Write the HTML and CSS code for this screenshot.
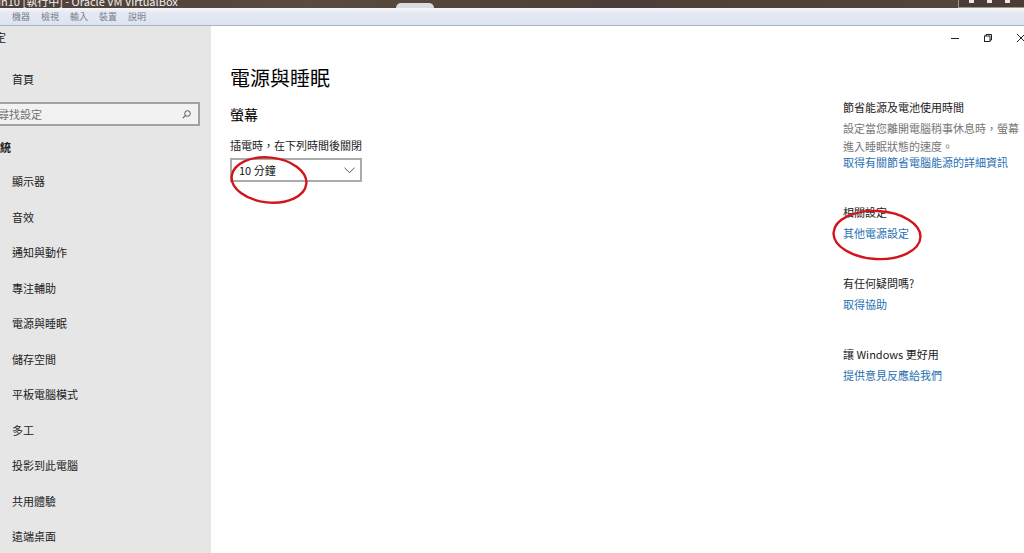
FILE: index.html
```html
<!DOCTYPE html>
<html lang="zh-Hant">
<head>
<meta charset="utf-8">
<title>電源與睡眠</title>
<link rel="stylesheet" href="styles.css">
</head>
<body>
<div class="vb-title">
  <span class="vb-title-text">in10 [執行中] - Oracle VM VirtualBox</span>
  <span class="vb-blob"></span>
  <span class="vb-btns"><i></i><i></i><i></i></span>
</div>
<div class="vb-menu">
  <span>機器</span><span>檢視</span><span>輸入</span><span>裝置</span><span>說明</span>
</div>
<div class="window">
  <aside class="sidebar">
    <div class="app-name">設定</div>
    <div class="home">首頁</div>
    <div class="search">
      <span class="search-ph">尋找設定</span>
      <svg class="search-ic" width="9" height="9" viewBox="0 0 9 9"><circle cx="5.5" cy="3.5" r="2.8" fill="none" stroke="#555" stroke-width="1"/><line x1="3.4" y1="5.6" x2="0.8" y2="8.2" stroke="#555" stroke-width="1.1"/></svg>
    </div>
    <div class="group">系統</div>
    <nav class="nav">
      <div class="nav-item">顯示器</div>
      <div class="nav-item">音效</div>
      <div class="nav-item">通知與動作</div>
      <div class="nav-item">專注輔助</div>
      <div class="nav-item">電源與睡眠</div>
      <div class="nav-item">儲存空間</div>
      <div class="nav-item">平板電腦模式</div>
      <div class="nav-item">多工</div>
      <div class="nav-item">投影到此電腦</div>
      <div class="nav-item">共用體驗</div>
      <div class="nav-item">遠端桌面</div>
    </nav>
  </aside>
  <main class="main">
    <div class="controls">
      <span class="ctl"><svg width="10" height="10" viewBox="0 0 10 10"><line x1="1" y1="5.5" x2="9" y2="5.5" stroke="#222" stroke-width="1"/></svg></span>
      <span class="ctl"><svg width="10" height="10" viewBox="0 0 10 10"><rect x="1.5" y="3" width="5.5" height="5.5" fill="none" stroke="#222" stroke-width="1"/><polyline points="3,3 3,1.5 8.5,1.5 8.5,7 7,7" fill="none" stroke="#222" stroke-width="1"/></svg></span>
      <span class="ctl ctl-close"><svg width="10" height="10" viewBox="0 0 10 10"><line x1="1" y1="1" x2="9" y2="9" stroke="#222" stroke-width="1"/><line x1="9" y1="1" x2="1" y2="9" stroke="#222" stroke-width="1"/></svg></span>
    </div>
    <div class="content">
      <section class="left">
        <h1 class="page-title">電源與睡眠</h1>
        <h2 class="sub">螢幕</h2>
        <div class="label">插電時，在下列時間後關閉</div>
        <div class="select">
          <span>10 分鐘</span>
          <svg width="11" height="7" viewBox="0 0 11 7"><polyline points="0.5,0.8 5.5,5.6 10.5,0.8" fill="none" stroke="#555" stroke-width="1"/></svg>
        </div>
      </section>
      <section class="right">
        <div class="r-head">節省能源及電池使用時間</div>
        <div class="r-desc">設定當您離開電腦稍事休息時，螢幕<br>進入睡眠狀態的速度。</div>
        <a class="r-link r-link-tight">取得有關節省電腦能源的詳細資訊</a>
        <div class="r-head r-gap">相關設定</div>
        <a class="r-link">其他電源設定</a>
        <div class="r-head r-gap">有任何疑問嗎?</div>
        <a class="r-link">取得協助</a>
        <div class="r-head r-gap">讓 Windows 更好用</div>
        <a class="r-link">提供意見反應給我們</a>
      </section>
    </div>
  </main>
</div>
<svg class="marks" width="1024" height="553" viewBox="0 0 1024 553">
  <ellipse cx="269" cy="180" rx="37.5" ry="22.5" transform="rotate(6 269 180)" fill="none" stroke="#d3141b" stroke-width="2.4"/>
  <ellipse cx="877" cy="235" rx="43.5" ry="24" transform="rotate(3 877 235)" fill="none" stroke="#d3141b" stroke-width="2.4"/>
</svg>
</body>
</html>
```
FILE: styles.css
```css
* { box-sizing: border-box; }
html, body { margin: 0; padding: 0; }
body {
  width: 1024px;
  height: 553px;
  overflow: hidden;
  position: relative;
  background: #fff;
  font-family: "Noto Sans CJK TC", "Noto Sans", "Liberation Sans", sans-serif;
  color: #1a1a1a;
}

.vb-title {
  height: 8px;
  overflow: hidden;
  display: flex;
  align-items: flex-end;
  background: linear-gradient(90deg, #4e4038 0%, #5a4a40 30%, #4d3f37 60%, #55463c 100%);
}
.vb-title-text {
  display: block;
  color: #f0f0f0;
  font-size: 11px;
  line-height: 11px;
  height: 11px;
  margin-bottom: 1px;
  margin-left: -2px;
  white-space: nowrap;
  width: 400px;
  flex: none;
}
.vb-blob {
  width: 38px;
  height: 5px;
  margin-left: -2px;
  border-radius: 5px 5px 0 0;
  background: #d9dde2;
  flex: none;
}
.vb-btns {
  margin-left: auto;
  width: 66px;
  height: 8px;
  border-left: 1px solid #a39686;
  border-bottom: 1px solid #a39686;
  background: #4a3d35;
  display: flex;
  gap: 13px;
  padding-left: 10px;
  flex: none;
}
.vb-btns i {
  display: block;
  width: 5px;
  height: 3px;
  background: #e8e8e8;
}

.vb-menu {
  height: 18px;
  display: flex;
  align-items: center;
  gap: 11px;
  padding-left: 12px;
  padding-top: 1px;
  background: linear-gradient(#f7f7fb 0%, #e6eaf4 25%, #dce3f0 100%);
  border-bottom: 1px solid #aab4c6;
  font-size: 9px;
  line-height: 12px;
  color: #7a7f8a;
}
.vb-menu span { white-space: nowrap; }

.window {
  display: flex;
  height: 527px;
}

.sidebar {
  width: 211px;
  flex: none;
  background: #e6e6e6;
  padding-top: 3px;
  font-size: 11px;
  line-height: 16px;
  overflow: hidden;
  color: #222;
}
.app-name { margin-left: -16px; white-space: nowrap; }
.home { margin-top: 26px; padding-left: 12px; }
.search {
  margin-top: 15px;
  margin-left: -20px;
  width: 220px;
  height: 24px;
  border: 2px solid #a2a2a2;
  background: #f2f2f2;
  display: flex;
  align-items: center;
  padding-left: 16px;
  padding-right: 7px;
  color: #707070;
}
.search-ph { flex: 1; }
.search-ic { display: block; }
.group { margin-top: 13px; margin-left: -11px; font-weight: 700; }
.nav { margin-top: 8.25px; }
.nav-item {
  height: 35.5px;
  display: flex;
  align-items: center;
  padding-left: 12px;
}

.main {
  flex: 1;
  overflow: hidden;
  display: flex;
  flex-direction: column;
}
.controls {
  height: 24px;
  display: flex;
  justify-content: flex-end;
  margin-right: -13px;
}
.ctl {
  width: 33px;
  display: flex;
  align-items: center;
  justify-content: center;
}
.content {
  display: flex;
  padding-top: 14px;
}
.left {
  padding-left: 19px;
  width: 632px;
}
.page-title {
  margin: 0;
  font-size: 20px;
  line-height: 28px;
  font-weight: 400;
  color: #000;
}
.sub {
  margin: 12px 0 0;
  font-size: 14px;
  line-height: 20px;
  font-weight: 400;
  color: #000;
}
.label {
  margin-top: 13px;
  font-size: 11px;
  line-height: 16px;
  color: #1a1a1a;
}
.select {
  margin-top: 5px;
  width: 132px;
  height: 24px;
  border: 2px solid #ababab;
  display: flex;
  align-items: center;
  justify-content: space-between;
  padding: 0 5px 0 7px;
  font-size: 11px;
  color: #111;
}
.select svg { display: block; }

.right {
  margin-top: 34px;
  width: 181px;
  font-size: 11px;
  line-height: 18px;
}
.r-head { color: #1a1a1a; }
.r-desc { margin-top: 3px; color: #767676; }
.r-link {
  display: block;
  margin-top: 3px;
  color: #1f6fb2;
  text-decoration: none;
}
.r-link-tight { margin-top: -2px; }
.r-gap { margin-top: 32px; }

.marks {
  position: absolute;
  left: 0;
  top: 0;
  pointer-events: none;
}
```
